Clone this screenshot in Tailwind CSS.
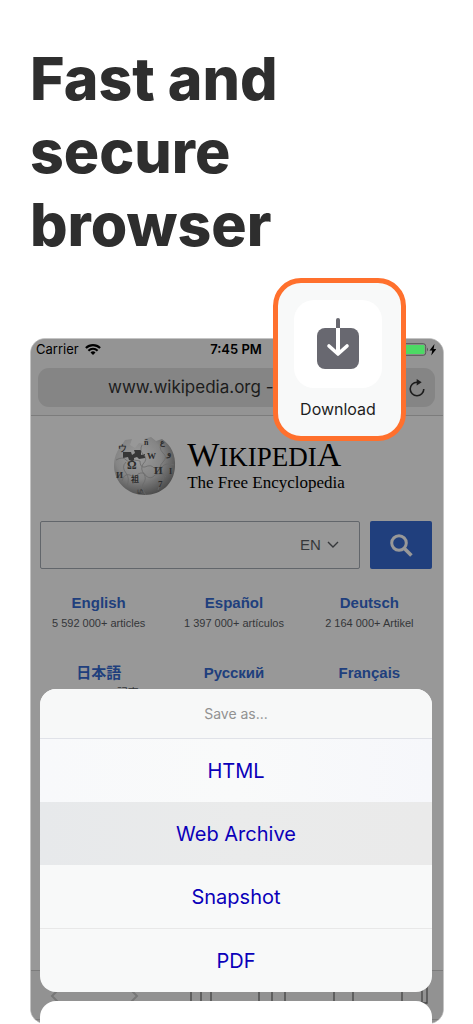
<!DOCTYPE html>
<html lang="en">
<head>
<meta charset="utf-8">
<meta name="viewport" content="width=device-width, initial-scale=1">
<title>Fast and secure browser</title>
<script src="https://cdn.jsdelivr.net/npm/@tailwindcss/browser@4"></script>
</head>
<body class="bg-white font-['Inter','Noto_Sans_CJK_JP',sans-serif] text-black">
<main class="flex h-screen flex-col overflow-hidden pr-[29px] pl-[30px] pt-[42px]">
  <h1 class="text-[59px] leading-[73px] font-extrabold text-[#2e2e2e]">Fast and<br>secure<br>browser</h1>

  <div class="relative mt-[77px] min-h-0 flex-1">
    <section class="relative flex h-full flex-col overflow-hidden rounded-[15px] border border-[#c4c4c4] bg-[#989898]">
      <header class="border-b border-[#7c7c7c] bg-[#949494] px-[7px] pb-2">
        <div class="-ml-[2px] grid h-[29px] grid-cols-3 items-center pb-2 text-[13px]">
          <div class="flex items-center gap-[6px]">
            <span>Carrier</span>
            <svg class="h-[11px] w-4" viewBox="0 0 16 11" fill="none" stroke="#000" stroke-width="2.1"><path d="M.9 4.1a10 10 0 0 1 14.2 0M3.4 6.7a6.5 6.5 0 0 1 9.2 0"/><path d="M8 11 5.5 8.6a3.5 3.5 0 0 1 5 0Z" fill="#000" stroke="none"/></svg>
          </div>
          <span class="text-center font-semibold">7:45 PM</span>
          <svg class="h-[13px] w-10 justify-self-end" viewBox="0 0 40 13"><rect x=".7" y=".7" width="29" height="11.6" rx="2.5" fill="none" stroke="#555"/><rect x="2" y="2" width="26.5" height="9" rx="1" fill="#4cd964"/><path d="M31 4.5q2 2 0 4Z" fill="#555"/><path d="m38.5 1-5 6.4h2.8L35.2 12.5 40.5 6h-2.9Z"/></svg>
        </div>
        <div class="mr-[1px] flex h-[39px] items-center justify-between rounded-[11px] bg-[#858585] pr-[9px] pl-[70px]">
          <span class="text-[17px] text-[#1c1c1c]">www.wikipedia.org -</span>
          <button aria-label="Reload"><svg class="h-5 w-[18px]" viewBox="0 0 18 20" fill="none" stroke="#1c1c1c" stroke-width="1.6"><path d="M9 4.2a6.8 6.8 0 1 0 6.8 6.8"/><path d="m8.7 1 5 3.2-5 3.3Z" fill="#1c1c1c" stroke="none"/></svg></button>
        </div>
      </header>

      <div class="mt-[13px] flex h-[72px] items-center justify-center gap-[10px] pt-[1px] pr-4">
        <svg class="h-[62px] w-[64px]" viewBox="0 0 64 60">
          <defs><radialGradient id="ball" cx=".4" cy=".35" r=".68"><stop offset="0" stop-color="#9c9c9c"/><stop offset=".55" stop-color="#858585"/><stop offset="1" stop-color="#4c4c4c"/></radialGradient></defs>
          <path d="M8 10 12 4 19 3 17 9 22 12 26 7 32 8 31 3 38 1 43 5 49 3C58 9 63 19 62 31 61 48 48 59 32 59 15 59 2 47 1 31 1 22 3 16 8 10Z" fill="url(#ball)"/>
          <path d="M10 16h8l1 3 3-2-1-3h7v5l4-1v4l-6 1-2-2-3 1v4l-5-2-1-3-5 1Z" fill="#363636"/>
          <g fill="none" stroke="#6a6a6a" stroke-width=".8"><path d="M3 24q7-4 10 0 5 4 8 0l6 1q0 7 5 6 6-3 9 1l8-1q4-5 12-2M9 45q2-8 8-6 5 4 8-1 6-3 8 2 5 4 9-1 7-3 11 2M29 9q-3 6 2 10 4 4-1 9-3 5 1 10 3 5-1 10-2 5 3 11M49 6q-4 6 1 11 5 4 0 9-5 5-1 10 4 5-1 10l-3 8M13 26q-5 5 0 11 4 5 1 13"/></g>
          <g fill="#2c2c2c" font-family="Liberation Serif, serif" font-weight="bold"><text x="14" y="33" font-size="12">Ω</text><text x="34" y="23" font-size="9">W</text><text x="41" y="38" font-size="11">И</text><text x="18" y="46" font-size="8" font-family="Noto Sans CJK JP, sans-serif">祖</text><text x="45" y="51" font-size="9">7</text><text x="54" y="20" font-size="9">و</text><text x="5" y="15" font-size="9">ウ</text><text x="3" y="42" font-size="9">И</text><text x="31" y="9" font-size="8">ñ</text><text x="47" y="9" font-size="8">ع</text><text x="24" y="57" font-size="8">ம</text><text x="56" y="38" font-size="8">I</text></g>
        </svg>
        <div class="font-['Liberation_Serif',serif]">
          <div class="text-[27px] leading-8 whitespace-nowrap"><span class="text-[34px]">W</span>IKIPEDI<span class="text-[34px]">A</span></div>
          <div class="text-[17px] leading-5 whitespace-nowrap">The Free Encyclopedia</div>
        </div>
      </div>

      <form class="mt-5 flex h-12 gap-[10px] pr-[11px] pl-[9px] font-['Liberation_Sans',sans-serif]">
        <div class="flex min-w-0 flex-1 items-center rounded-[2px] border border-[#62666b] pr-5">
          <input type="search" aria-label="Search Wikipedia" class="h-full min-w-0 flex-1 bg-transparent outline-none">
          <select aria-label="Language" class="appearance-none text-[15px] text-[#36383b]"><option>EN</option></select>
          <svg class="ml-[6px] h-3 w-3" viewBox="0 0 12 12" fill="none" stroke="#36383b" stroke-width="1.4"><path d="m1 3 5 5 5-5"/></svg>
        </div>
        <button type="button" aria-label="Search" class="flex w-[62px] items-center justify-center rounded-[2px] bg-[#203f7d]"><svg class="h-6 w-6" viewBox="0 0 24 24" fill="none" stroke="#989898" stroke-width="3"><circle cx="10" cy="10" r="7.3"/><path d="m15.4 15.4 7 7" stroke-width="3.6"/></svg></button>
      </form>

      <nav class="mr-[6px] mt-6 grid grid-cols-3 gap-y-[30px] text-center font-['Liberation_Sans','Noto_Sans_CJK_JP',sans-serif] text-[11px] leading-5 text-[#343638]">
        <a href="#"><b class="block text-[15px] text-[#203f7d]">English</b>5 592 000+ articles</a>
        <a href="#"><b class="block text-[15px] text-[#203f7d]">Español</b>1 397 000+ artículos</a>
        <a href="#"><b class="block text-[15px] text-[#203f7d]">Deutsch</b>2 164 000+ Artikel</a>
        <a href="#"><b class="block text-[15px] text-[#203f7d]">日本語</b>1 099 000+ 記事</a>
        <a href="#"><b class="block text-[15px] text-[#203f7d]">Русский</b>1 460 000+ статей</a>
        <a href="#"><b class="block text-[15px] text-[#203f7d]">Français</b>1 970 000+ articles</a>
      </nav>

      <footer class="mt-auto h-[53px] border-t border-[#7c7c7c] bg-[#929292]">
        <svg class="h-[49px] w-full border-b border-[#7c7c7c]" viewBox="0 0 412 48" fill="none" stroke="#444" stroke-width="1.3"><path d="m27 19-6 6 6 6M100 19l6 6-6 6" stroke="#777" stroke-width="2"/><path d="M160 14h20v22h-20ZM170 6v26M228 13h13v22h-13ZM241 13h13v22h-13ZM303 14h19v22h-19ZM371 14h20v22h-20ZM375 10h21v22h-5"/></svg>
      </footer>
    </section>

    <div role="dialog" aria-label="Save as" class="absolute right-3 left-[10px] top-[351px] overflow-hidden rounded-[16px] bg-[#f8f9f9] text-[20px] text-[#0b00b9]">
      <p class="flex h-[49px] items-center justify-center bg-[#f7f8f8] text-[14px] text-[#929292]">Save as...</p>
      <button class="block h-16 w-full border-t border-[#e0e2e8] bg-linear-to-r from-[#f8f9fb] via-[#f9fafa] to-[#f6f7fb]">HTML</button>
      <button class="block h-[63px] w-full bg-linear-to-r from-[#e7e9eb] via-[#eaebeb] to-[#eaeaea]">Web Archive</button>
      <button class="block h-[63px] w-full">Snapshot</button>
      <button class="block h-16 w-full border-t border-[#e8e8e8]">PDF</button>
    </div>
    <button aria-label="Cancel" class="absolute right-3 left-[10px] top-[663px] h-16 rounded-[16px] bg-white"></button>

    <button class="absolute -top-[60px] right-[38px] flex h-[163px] w-[133px] flex-col items-center rounded-[28px] border-[5px] border-[#ff702d] bg-[#f8f9f9] pt-[17px] pr-[3px] text-[16px] text-[#1e1e1e]">
      <span class="flex h-[88px] w-[88px] items-center justify-center rounded-[20px] bg-white">
        <svg class="h-[54px] w-[44px]" viewBox="0 0 44 54" fill="none" stroke-linecap="round" stroke-linejoin="round"><rect x="1" y="11" width="42" height="41" rx="8" fill="#686870"/><path d="M22 3v9" stroke="#686870" stroke-width="4"/><path d="M22 11v26" stroke="#fff" stroke-width="4" stroke-linecap="butt"/><path d="m13 29 9 8 9-8" stroke="#fff" stroke-width="3.6"/></svg>
      </span>
      <span class="mt-[9px]">Download</span>
    </button>
  </div>
</main>
</body>
</html>
